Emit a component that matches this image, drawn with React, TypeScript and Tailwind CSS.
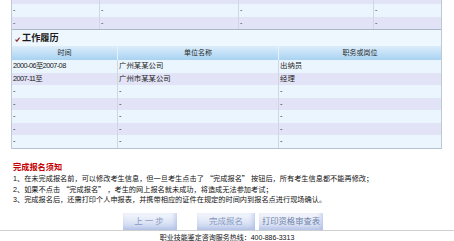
import React from "react";

const FONT = '"Liberation Sans", "Noto Sans CJK SC", sans-serif';

function TopRow({ h, bg, dash }: { h: string; bg: string; dash: boolean }) {
  const cols = ["w-[88px]", "w-[139px]", "w-[135px]", "flex-1"];
  return (
    <div className={`flex ${h} ${bg}`}>
      {cols.map((c, i) => (
        <div
          key={i}
          className={`${c} ${i < 3 ? "border-r border-[#cdd8e4]" : ""} pl-[1px] text-[7px] leading-[12px] text-[#333] overflow-hidden`}
        >
          {dash ? "-" : ""}
        </div>
      ))}
    </div>
  );
}

const history = [
  ["2000-06至2007-08", "广州某某公司", "出纳员"],
  ["2007-11至", "广州市某某公司", "经理"],
  ["-", "-", "-"],
  ["-", "-", "-"],
  ["-", "-", "-"],
  ["-", "-", "-"],
  ["-", "-", "-"],
];

function Q({ children }: { children: React.ReactNode }) {
  return (
    <span style={{ fontFamily: '"Noto Sans CJK SC", sans-serif' }}>{children}</span>
  );
}

export default function App() {
  return (
    <div
      className="w-[454px] h-[241px] bg-white overflow-hidden text-[#222]"
      style={{ fontFamily: FONT }}
    >
      <div className="ml-[11px] w-[431px] border-x border-[#bccad8] bg-[#eaf5fd]">
        <TopRow h="h-[4px]" bg="bg-[#e3e3f7]" dash={false} />
        <TopRow h="h-[13px]" bg="bg-[#eaf5fd]" dash={true} />
        <TopRow h="h-[12px]" bg="bg-[#e3e3f7]" dash={true} />
        <div className="h-px bg-[#a9b7c8]" />
        <div className="h-[16px] bg-[#eef7fd] flex items-center pl-[3px] gap-[2px]">
          <svg width="5" height="5" viewBox="0 0 5 5" className="mt-[3px]">
            <path d="M0.5 2.6 L1.9 4.2 L4.6 0.6" stroke="#8a2a2a" strokeWidth="1.2" fill="none" />
          </svg>
          <span className="text-[9.2px] font-bold leading-[16px] text-[#1a1a1a]">工作履历</span>
        </div>
        <div className="h-[14px] flex bg-linear-to-b from-[#dcedfa] to-[#a8d3f2] text-[7px] leading-[14px] text-[#2a2a2a]">
          <div className="w-[106px] border-r border-[#e6f2fb] text-center">时间</div>
          <div className="w-[161px] border-r border-[#e6f2fb] text-center">单位名称</div>
          <div className="flex-1 text-center">职务或岗位</div>
        </div>
        {history.map((r, i) => (
          <div
            key={i}
            className={`h-[12.5px] flex text-[7.4px] leading-[12.5px] text-[#222] ${i % 2 === 0 ? "bg-[#eaf5fd]" : "bg-[#e3e3f7]"}`}
          >
            <div className="w-[106px] border-r border-[#cdd8e4] pl-[1px] tracking-[-0.6px] overflow-hidden whitespace-nowrap">{r[0]}</div>
            <div className="w-[161px] border-r border-[#cdd8e4] pl-[1px] whitespace-nowrap">{r[1]}</div>
            <div className="flex-1 pl-[1px] whitespace-nowrap">{r[2]}</div>
          </div>
        ))}
        <div className="h-px bg-[#b4c2d2]" />
      </div>

      <div className="pl-[13px] mt-[14px]">
        <div className="text-[8.2px] leading-[10px] font-bold text-[#c40000]">完成报名须知</div>
        <div className="text-[7.2px] leading-[10px] text-[#111] whitespace-nowrap">
          <div>1、在未完成报名前，可以修改考生信息，但一旦考生点击了 <Q>“</Q>完成报名<Q>”</Q> 按钮后，所有考生信息都不能再修改；</div>
          <div>2、如果不点击 <Q>“</Q>完成报名<Q>”</Q> ，考生的网上报名就未成功，将造成无法参加考试；</div>
          <div>3、完成报名后，还需打印个人申报表，并携带相应的证件在规定的时间内到报名点进行现场确认。</div>
        </div>
      </div>

      <div className="flex items-end h-[17px] mt-[8px] pl-[123px]">
        <button className="w-[54px] h-[17px] bg-linear-to-b from-[#f6f8fd] to-[#c8d4ef] text-[8.5px] tracking-[2px] text-[#8a9bc0] shadow-[inset_-2px_-2px_4px_rgba(150,170,220,0.5)]">
          上一步
        </button>
        <button className="ml-[20px] w-[58px] h-[17px] bg-linear-to-b from-[#f6f8fd] to-[#c8d4ef] text-[8.5px] text-[#8a9bc0] shadow-[inset_-2px_-2px_4px_rgba(150,170,220,0.5)]">
          完成报名
        </button>
        <button className="ml-[4px] w-[64px] h-[17px] bg-linear-to-b from-[#f6f8fd] to-[#ccd7f0] text-[8.3px] text-[#7283aa] shadow-[inset_-2px_-2px_4px_rgba(150,170,220,0.5)]">
          打印资格审查表
        </button>
      </div>
      <div className="h-px bg-[#cfcfcf]" />
      <div className="text-center text-[7px] leading-[13px] text-[#111] whitespace-nowrap">
        职业技能鉴定咨询服务热线：400-886-3313
      </div>
    </div>
  );
}
